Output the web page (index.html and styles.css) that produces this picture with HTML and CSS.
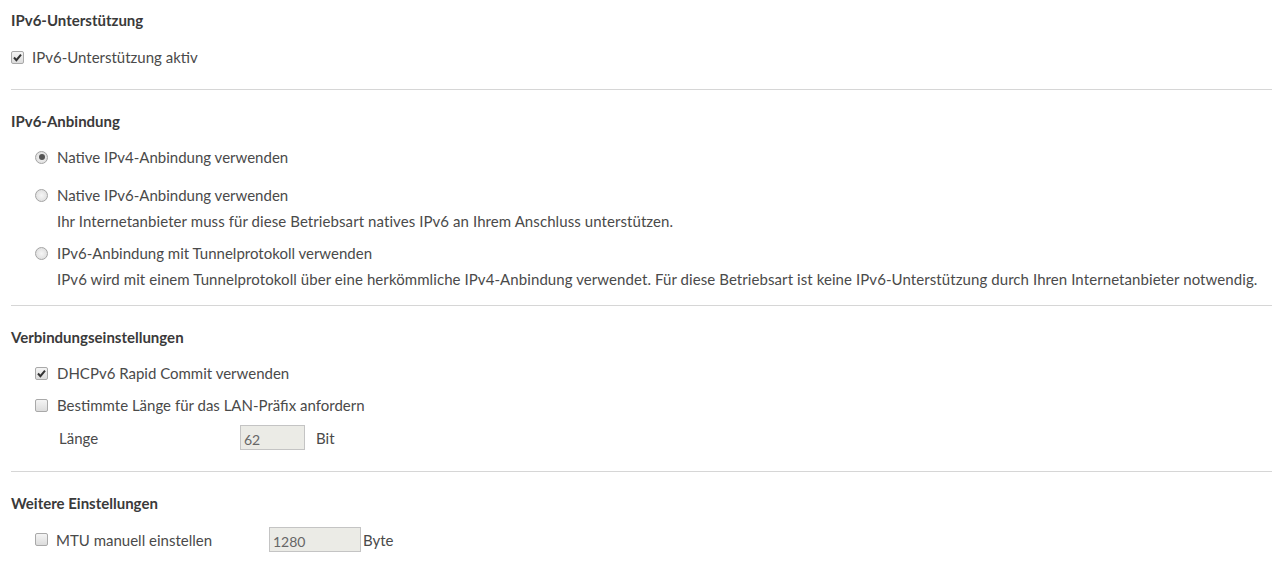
FILE: index.html
```html
<!DOCTYPE html>
<html lang="de">
<head>
<meta charset="utf-8">
<title>IPv6</title>
<link rel="stylesheet" href="styles.css">
</head>
<body>
<div class="page">
  <section class="sec sec-first">
    <h2 class="title">IPv6-Unterstützung</h2>
    <div class="row row-top">
      <span class="cb checked"><svg viewBox="0 0 13 13" width="13" height="13"><path d="M3 6.5 L5.4 9.2 L10 3.6" fill="none" stroke="#333" stroke-width="2"/></svg></span>
      <span class="lbl">IPv6-Unterstützung aktiv</span>
    </div>
  </section>

  <section class="sec sec-2">
    <h2 class="title">IPv6-Anbindung</h2>
    <div class="row ind r1"><span class="rb checked"></span><span class="lbl">Native IPv4-Anbindung verwenden</span></div>
    <div class="row ind r2"><span class="rb"></span><span class="lbl">Native IPv6-Anbindung verwenden</span></div>
    <p class="desc">Ihr Internetanbieter muss für diese Betriebsart natives IPv6 an Ihrem Anschluss unterstützen.</p>
    <div class="row ind r3"><span class="rb"></span><span class="lbl">IPv6-Anbindung mit Tunnelprotokoll verwenden</span></div>
    <p class="desc">IPv6 wird mit einem Tunnelprotokoll über eine herkömmliche IPv4-Anbindung verwendet. Für diese Betriebsart ist keine IPv6-Unterstützung durch Ihren Internetanbieter notwendig.</p>
  </section>

  <section class="sec sec-3">
    <h2 class="title">Verbindungseinstellungen</h2>
    <div class="row ind c1">
      <span class="cb checked"><svg viewBox="0 0 13 13" width="13" height="13"><path d="M3 6.5 L5.4 9.2 L10 3.6" fill="none" stroke="#333" stroke-width="2"/></svg></span>
      <span class="lbl">DHCPv6 Rapid Commit verwenden</span>
    </div>
    <div class="row ind c2">
      <span class="cb"></span>
      <span class="lbl">Bestimmte Länge für das LAN-Präfix anfordern</span>
    </div>
    <div class="field-row len-row">
      <span class="flabel len-label">Länge</span>
      <span class="inp len-inp">62</span>
      <span class="unit bit">Bit</span>
    </div>
  </section>

  <section class="sec sec-4">
    <h2 class="title">Weitere Einstellungen</h2>
    <div class="field-row mtu-row">
      <span class="cb"></span>
      <span class="flabel mtu-label">MTU manuell einstellen</span>
      <span class="inp mtu-inp">1280</span>
      <span class="unit byte">Byte</span>
    </div>
  </section>
</div>
</body>
</html>
```

FILE: styles.css
```css
* { box-sizing: border-box; }
html, body { margin: 0; padding: 0; background: #fff; }
body {
  font-family: "Source Sans Pro", Lato, "Liberation Sans", sans-serif;
  font-size: 15px;
  color: #4a4a4a;
}
.page { padding: 10px 0 0 11px; }
.sec { border-bottom: 1px solid #d6d6d6; }
.sec-4 { border-bottom: none; }
.title {
  margin: 0;
  font-size: 15px;
  line-height: 20px;
  font-weight: bold;
  color: #3a3a3a;
}
.sec-first { padding-bottom: 22px; }
.sec-2 { padding: 21px 0 16px; }
.sec-3 { padding: 21px 0 21px; }
.sec-4 { padding: 21px 0 0; }

.row { display: flex; align-items: center; height: 20px; line-height: 20px; }
.row-top { margin-top: 17px; }
.ind { padding-left: 24px; }
.lbl { white-space: nowrap; }

.cb {
  width: 13px; height: 13px;
  flex: none;
  margin-right: 8px;
  border: 1px solid #a9a9a9;
  border-radius: 2px;
  background: linear-gradient(#f4f4f4, #dcdcdc);
  display: inline-flex;
  align-items: center;
  justify-content: center;
  position: relative;
}
.cb svg { position: absolute; left: -1px; top: -1px; }
.rb {
  width: 13px; height: 13px;
  flex: none;
  margin-right: 9px;
  border: 1px solid #a4a4a4;
  border-radius: 50%;
  background: radial-gradient(circle, #f6f6f6 0, #d8d8d8 100%);
  display: inline-flex;
  align-items: center;
  justify-content: center;
}
.rb.checked::after {
  content: "";
  width: 6px; height: 6px;
  border-radius: 50%;
  background: #555;
}
.ind .cb { margin-right: 9px; }

.r1 { margin-top: 16px; }
.r2 { margin-top: 18px; }
.r3 { margin-top: 12px; }
.desc {
  margin: 6px 0 0;
  padding-left: 46px;
  line-height: 20px;
  white-space: nowrap;
  letter-spacing: 0.08px;
}
.c1 { margin-top: 16px; }
.c2 { margin-top: 12px; }

.field-row { display: flex; align-items: center; height: 25px; }
.len-row { margin-top: 10px; padding-left: 48px; }
.len-label { width: 181px; }
.inp {
  height: 25px;
  border: 1px solid #c4c4c4;
  background: #ebebe6;
  color: #666;
  font-size: 14px;
  line-height: 25px;
  padding: 1px 0 0 3px;
}
.len-inp { width: 65px; }
.bit { margin-left: 11px; }
.mtu-row { margin-top: 14px; padding-left: 24px; }
.mtu-label { width: 213px; white-space: nowrap; }
.mtu-inp { width: 92px; }
.byte { margin-left: 2px; }
```
